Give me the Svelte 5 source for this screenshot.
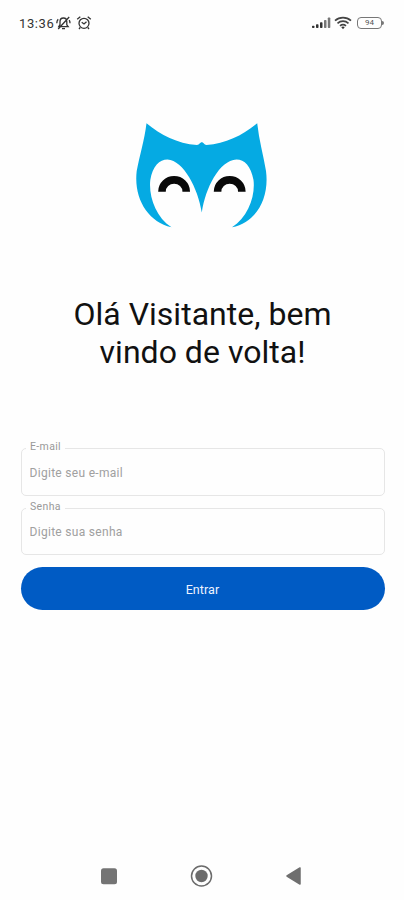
<script>
  let email = $state('');
  let password = $state('');
</script>

<div class="screen">
  <header class="status">
    <div class="left">
      <span class="time">13:36</span>
      <svg class="bell" width="17" height="16" viewBox="0 0 17 16" fill="none" stroke="#333" stroke-width="1.3">
        <path d="M3.8 11.7h9.4L11.8 9.8V6.7C11.8 4.3 10.3 3 8.4 3S5 4.3 5 6.7v3zM7 13.7h3M3.2 14 14.2 2M1.8 8.2c0-1.8.5-3 1.4-4M15 8.2c0-1.3-.3-2.3-.8-3.1" />
      </svg>
      <svg class="alarm" width="16" height="16" viewBox="0 0 16 16" fill="none" stroke="#333" stroke-width="1.3">
        <circle cx="8" cy="8.3" r="5" />
        <path d="M1.2 4.2 4.3 1.7M14.8 4.2l-3.1-2.5M5.7 7.2 8 9l2.5-2.3M4.2 12.5 3 14M11.8 12.5 13 14" />
      </svg>
    </div>
    <div class="right">
      <svg width="19" height="12" viewBox="0 0 19 12">
        <g fill="#333">
          <rect x="0" y="8.7" width="2.5" height="2.3" rx=".7" />
          <rect x="4" y="7.3" width="2.5" height="3.7" rx=".7" />
          <rect x="8" y="5.2" width="2.5" height="5.8" rx=".7" />
        </g>
        <g fill="#777">
          <rect x="12" y="3" width="2.5" height="8" rx=".7" />
          <rect x="15.8" y=".5" width="2.5" height="10.5" rx=".7" />
        </g>
      </svg>
      <svg class="wifi" width="18" height="14" viewBox="0 0 18 14" fill="none" stroke="#444" stroke-width="1.7">
        <path d="M1 4.6c4.6-4 11.4-4 16 0M3.5 7.3c3.2-2.8 7.8-2.8 11 0M6 9.8c1.8-1.5 4.2-1.5 6 0" />
        <path d="M7.2 11.1c1.1-.8 2.5-.8 3.6 0L9 13.2z" fill="#333" stroke="none" />
      </svg>
      <div class="battery"><span>94</span></div>
    </div>
  </header>

  <main>
    <svg class="owl" width="155" height="130" viewBox="0 0 155 130">
      <path
        fill="#05aae3"
        d="M21.5 13.2C36 25 52 33.5 72 35C74.5 35 75 32.3 76.8 32.3C78.6 32.3 79 35 81.5 35C101 33.5 118 25 132.2 13.2C134 30 138.500 46 141 61C144.500 88 132 112 107 117.300C123 107 130.500 86 128.500 70C126 56 119.500 49.400 111.500 49.400C94 50.500 80.500 78 76.800 102.500C73 78 58.500 50.500 42.500 49.400C34.500 49.400 27.500 56 25.300 70C23.500 86 30.500 107 46.500 117.300C22.500 112 8.500 88 11.700 61C14.500 46 19.500 30 21.500 13.200Z"
      />
      <g fill="none" stroke="#090909" stroke-width="7.6">
        <path d="M37 81.800v-.3a12.100 11.600 0 0 1 24.200 0v.3" />
        <path d="M92.600 81.800v-.3a12.100 11.600 0 0 1 24.200 0v.3" />
      </g>
    </svg>

    <h1>Olá Visitante, bem<br />vindo de volta!</h1>

    <form onsubmit={(e) => e.preventDefault()}>
      <label class="field">
        <span class="label">E-mail</span>
        <input type="email" placeholder="Digite seu e-mail" bind:value={email} />
      </label>
      <label class="field">
        <span class="label">Senha</span>
        <input type="password" placeholder="Digite sua senha" bind:value={password} />
      </label>
      <button type="submit">Entrar</button>
    </form>
  </main>

  <nav>
    <svg width="24" height="24" viewBox="0 0 24 24"><rect x="4" y="4.200" width="16" height="16" rx="2.500" fill="#747474" /></svg>
    <svg width="24" height="24" viewBox="0 0 24 24">
      <circle cx="11.500" cy="12" r="10" fill="none" stroke="#6b6b6b" stroke-width="1.500" />
      <circle cx="11.500" cy="12" r="6.200" fill="#6b6b6b" />
    </svg>
    <svg width="24" height="24" viewBox="0 0 24 24">
      <path d="M5 12 18 4v16z" fill="#6f6f6f" stroke="#6f6f6f" stroke-width="1.500" stroke-linejoin="round" />
    </svg>
  </nav>
</div>

<style>
  :global(body) {
    margin: 0;
    background: #fff;
  }
  .screen {
    box-sizing: border-box;
    height: 900px;
    display: flex;
    flex-direction: column;
    background: #fefefe;
    font-family: Roboto, sans-serif;
    overflow: hidden;
  }
  .status {
    height: 46px;
    flex: none;
    padding: 0 22px 0 19px;
    display: flex;
    align-items: center;
    justify-content: space-between;
  }
  .left,
  .right {
    display: flex;
    align-items: center;
  }
  .time {
    font-size: 13px;
    letter-spacing: 0.6px;
    color: #333;
    padding-top: 1px;
  }
  .bell {
    margin-left: 1px;
  }
  .alarm {
    margin-left: 4px;
  }
  .wifi {
    margin-left: 3px;
  }
  .battery {
    position: relative;
    box-sizing: border-box;
    width: 25px;
    height: 12px;
    margin-left: 5px;
    border: 1.5px solid #777;
    border-radius: 4px;
    display: flex;
    align-items: center;
    justify-content: center;
    font-size: 8px;
    line-height: 8px;
    color: #555;
  }
  .battery::after {
    content: '';
    position: absolute;
    right: -3px;
    top: 3px;
    width: 2px;
    height: 4px;
    border-radius: 0 2px 2px 0;
    background: #777;
  }
  main {
    flex: 1;
    padding: 64px 19.5px 0 20.5px;
    display: flex;
    flex-direction: column;
    align-items: center;
  }
  .owl {
    flex: none;
  }
  h1 {
    margin: 55px 0 0;
    font-size: 32px;
    line-height: 38px;
    font-weight: 400;
    letter-spacing: 0.02px;
    text-align: center;
    color: #111;
  }
  form {
    align-self: stretch;
    margin-top: 77px;
    display: flex;
    flex-direction: column;
    gap: 12px;
  }
  .field {
    position: relative;
    box-sizing: border-box;
    height: 48px;
    display: flex;
    border: 1.5px solid #e6e6e6;
    border-radius: 5px;
  }
  .field + .field {
    height: 47px;
  }
  .label {
    position: absolute;
    left: 4.5px;
    top: -8px;
    padding: 0 4px;
    background: #fefefe;
    font-size: 10.5px;
    line-height: 12px;
    letter-spacing: 0.35px;
    color: #999;
  }
  input {
    flex: 1;
    min-width: 0;
    padding: 1px 8px 0;
    border: 0;
    outline: 0;
    background: none;
    font: 12px Roboto, sans-serif;
    letter-spacing: 0.3px;
    color: #333;
  }
  input::placeholder {
    color: #a0a0a0;
    opacity: 1;
  }
  button {
    height: 43px;
    padding: 2px 0 0;
    border: 0;
    border-radius: 22px;
    background: #005bc4;
    color: #eef4ff;
    font: 12.5px Roboto, sans-serif;
    letter-spacing: 0.1px;
  }
  nav {
    flex: none;
    height: 48px;
    padding: 0 98px 0 97px;
    display: flex;
    align-items: center;
    justify-content: space-between;
  }
</style>
